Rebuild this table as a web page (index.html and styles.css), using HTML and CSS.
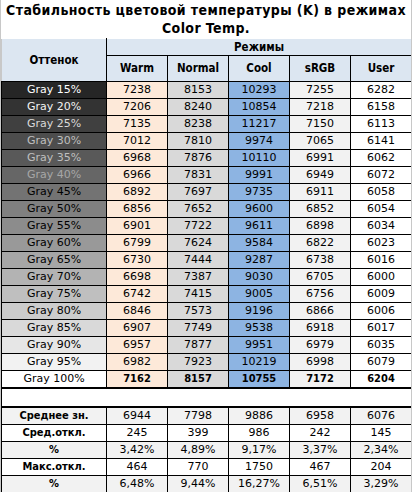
FILE: index.html
```html
<!DOCTYPE html>
<html lang="ru">
<head>
    <meta charset="UTF-8">
    <meta name="viewport" content="width=device-width, initial-scale=1.0">
    <title>Стабильность цветовой температуры</title>
    <link rel="stylesheet" href="styles.css">
</head>
<body>
    <div class="sheet">
        <h1 class="title">Стабильность цветовой температуры (K) в режимах<br>Color Temp.</h1>

        <table class="temps">
            <colgroup>
                <col class="col-shade">
                <col class="col-mode">
                <col class="col-mode">
                <col class="col-mode">
                <col class="col-mode">
                <col class="col-mode">
            </colgroup>
            <thead>
                <tr>
                    <th rowspan="2" class="head-shade">Оттенок</th>
                    <th colspan="5" class="head-group">Режимы</th>
                </tr>
                <tr class="head-modes">
                    <th>Warm</th>
                    <th>Normal</th>
                    <th>Cool</th>
                    <th>sRGB</th>
                    <th class="last">User</th>
                </tr>
            </thead>

            <!-- measured values per gray level -->
            <tbody class="grays">
                <tr class="g15"><td class="shade">Gray 15%</td><td class="warm">7238</td><td class="normal">8153</td><td class="cool">10293</td><td class="srgb">7255</td><td class="user">6282</td></tr>
                <tr class="g20"><td class="shade">Gray 20%</td><td class="warm">7206</td><td class="normal">8240</td><td class="cool">10854</td><td class="srgb">7218</td><td class="user">6158</td></tr>
                <tr class="g25"><td class="shade">Gray 25%</td><td class="warm">7135</td><td class="normal">8238</td><td class="cool">11217</td><td class="srgb">7150</td><td class="user">6113</td></tr>
                <tr class="g30"><td class="shade">Gray 30%</td><td class="warm">7012</td><td class="normal">7810</td><td class="cool">9974</td><td class="srgb">7065</td><td class="user">6141</td></tr>
                <tr class="g35"><td class="shade">Gray 35%</td><td class="warm">6968</td><td class="normal">7876</td><td class="cool">10110</td><td class="srgb">6991</td><td class="user">6062</td></tr>
                <tr class="g40"><td class="shade">Gray 40%</td><td class="warm">6966</td><td class="normal">7831</td><td class="cool">9991</td><td class="srgb">6949</td><td class="user">6072</td></tr>
                <tr class="g45"><td class="shade">Gray 45%</td><td class="warm">6892</td><td class="normal">7697</td><td class="cool">9735</td><td class="srgb">6911</td><td class="user">6058</td></tr>
                <tr class="g50"><td class="shade">Gray 50%</td><td class="warm">6856</td><td class="normal">7652</td><td class="cool">9600</td><td class="srgb">6852</td><td class="user">6054</td></tr>
                <tr class="g55"><td class="shade">Gray 55%</td><td class="warm">6901</td><td class="normal">7722</td><td class="cool">9611</td><td class="srgb">6898</td><td class="user">6034</td></tr>
                <tr class="g60"><td class="shade">Gray 60%</td><td class="warm">6799</td><td class="normal">7624</td><td class="cool">9584</td><td class="srgb">6822</td><td class="user">6023</td></tr>
                <tr class="g65"><td class="shade">Gray 65%</td><td class="warm">6730</td><td class="normal">7444</td><td class="cool">9287</td><td class="srgb">6738</td><td class="user">6016</td></tr>
                <tr class="g70"><td class="shade">Gray 70%</td><td class="warm">6698</td><td class="normal">7387</td><td class="cool">9030</td><td class="srgb">6705</td><td class="user">6000</td></tr>
                <tr class="g75"><td class="shade">Gray 75%</td><td class="warm">6742</td><td class="normal">7415</td><td class="cool">9005</td><td class="srgb">6756</td><td class="user">6009</td></tr>
                <tr class="g80"><td class="shade">Gray 80%</td><td class="warm">6846</td><td class="normal">7573</td><td class="cool">9196</td><td class="srgb">6866</td><td class="user">6006</td></tr>
                <tr class="g85"><td class="shade">Gray 85%</td><td class="warm">6907</td><td class="normal">7749</td><td class="cool">9538</td><td class="srgb">6918</td><td class="user">6017</td></tr>
                <tr class="g90"><td class="shade">Gray 90%</td><td class="warm">6957</td><td class="normal">7877</td><td class="cool">9951</td><td class="srgb">6979</td><td class="user">6035</td></tr>
                <tr class="g95"><td class="shade">Gray 95%</td><td class="warm">6982</td><td class="normal">7923</td><td class="cool">10219</td><td class="srgb">6998</td><td class="user">6079</td></tr>
                <tr class="g100 strong"><td class="shade">Gray 100%</td><td class="warm">7162</td><td class="normal">8157</td><td class="cool">10755</td><td class="srgb">7172</td><td class="user">6204</td></tr>
            </tbody>

            <tbody class="gap">
                <tr><td colspan="6"></td></tr>
            </tbody>

            <tbody class="stats">
                <tr class="alt"><th>Среднее зн.</th><td>6944</td><td>7798</td><td>9886</td><td>6958</td><td>6076</td></tr>
                <tr><th>Сред.откл.</th><td>245</td><td>399</td><td>986</td><td>242</td><td>145</td></tr>
                <tr class="alt"><th>%</th><td>3,42%</td><td>4,89%</td><td>9,17%</td><td>3,37%</td><td>2,34%</td></tr>
                <tr><th>Макс.откл.</th><td>464</td><td>770</td><td>1750</td><td>467</td><td>204</td></tr>
                <tr class="alt"><th>%</th><td>6,48%</td><td>9,44%</td><td>16,27%</td><td>6,51%</td><td>3,29%</td></tr>
            </tbody>
        </table>
    </div>
</body>
</html>
```

FILE: styles.css
```css
body {
    margin: 0;
    padding: 0;
    background: #ffffff;
    font-family: 'DejaVu Sans', Verdana, sans-serif;
    font-size: 11px;
    color: #000000;
}

.sheet {
    width: 412px;
    height: 492px;
    box-sizing: border-box;
    border-left: 1px solid #c8c8c8;
    border-right: 1px solid #c8c8c8;
    overflow: hidden;
}

.title {
    margin: 0;
    padding: 1px 0 1px;
    height: 38px;
    box-sizing: border-box;
    font-size: 14px;
    line-height: 18px;
    font-weight: bold;
    font-stretch: condensed;
    text-align: center;
    letter-spacing: 0.4px;
}

.temps {
    width: 410px;
    table-layout: fixed;
    border-collapse: collapse;
}

.col-shade { width: 105px; }
.col-mode { width: 61px; }

.temps th,
.temps td {
    padding: 0;
    height: 16px;
    line-height: 16px;
    text-align: center;
    white-space: nowrap;
    border: 1px solid #000000;
}

.temps th {
    font-weight: bold;
    font-stretch: condensed;
}

/* header */
.temps thead th {
    background: #dce6f1;
    border-top-color: #ffffff;
    font-size: 11.5px;
}

.head-shade {
    border-left-color: #c8c8c8 !important;
}

.head-group {
    border-right-color: #c8c8c8 !important;
}

.head-modes th {
    height: 25px;
    line-height: 25px;
}

.head-modes .last {
    border-right-color: #c8c8c8;
}

/* mode columns */
.warm { background: #fde9d9; }
.normal { background: #d9d9d9; }
.cool { background: #8db4e2; }
.srgb { background: #f2f2f2; }
.user { background: #ffffff; }

.strong td:not(.shade) {
    font-weight: bold;
    font-stretch: condensed;
}

/* gray ramp */
.g15 .shade { background: #262626; color: #ffffff; }
.g20 .shade { background: #333333; color: #f2f2f2; }
.g25 .shade { background: #404040; color: #d9d9d9; }
.g30 .shade { background: #4d4d4d; color: #bfbfbf; }
.g35 .shade { background: #595959; color: #bfbfbf; }
.g40 .shade { background: #666666; color: #a6a6a6; }
.g45 .shade { background: #737373; }
.g50 .shade { background: #808080; }
.g55 .shade { background: #8c8c8c; }
.g60 .shade { background: #999999; }
.g65 .shade { background: #a6a6a6; }
.g70 .shade { background: #b3b3b3; }
.g75 .shade { background: #bfbfbf; }
.g80 .shade { background: #cccccc; }
.g85 .shade { background: #d9d9d9; }
.g90 .shade { background: #e6e6e6; }
.g95 .shade { background: #f2f2f2; }
.g100 .shade { background: #ffffff; }

.g100 td {
    border-bottom: 2px solid #000000;
}

.gap td {
    height: 17px;
    border-bottom: 2px solid #000000;
}

.stats .alt th,
.stats .alt td {
    background: #f2f2f2;
}
```
